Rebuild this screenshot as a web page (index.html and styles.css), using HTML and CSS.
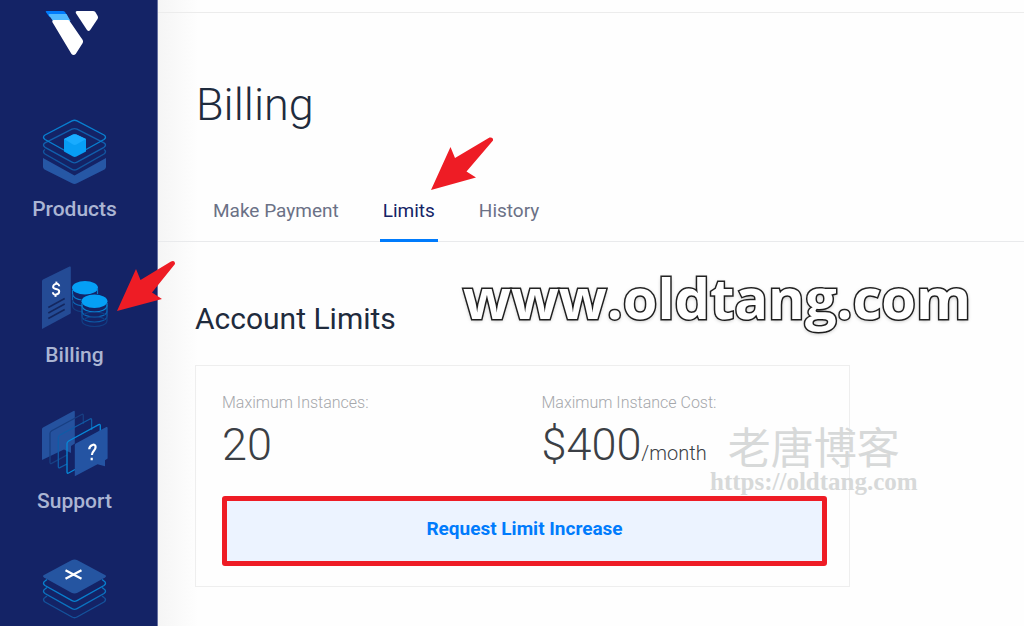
FILE: index.html
```html
<!DOCTYPE html>
<html lang="en">
<head>
<meta charset="utf-8">
<meta name="viewport" content="width=device-width, initial-scale=1">
<title>Billing</title>
<link rel="stylesheet" href="styles.css">
</head>
<body>
<div class="page">
  <aside class="sidebar">
    <a class="logo" href="#" aria-label="Home">
      <svg width="68" height="48" viewBox="41 8 68 48" aria-hidden="true">
        <path fill="#007bfc" d="M46.500 11H63q1.300 0 2 1l3 5H49.500l-3.700-5q-.3-1 .7-1z"/>
        <path fill="#51b9ff" d="M49.500 14H66.500l4 7H53l-4.300-6q-.2-1 .8-1z"/>
        <path fill="#fff" d="M53.500 20H68q1 0 1.600 1L82.700 40q.8 1.500 0 3l-7 11q-2.200 2-4.200 0L52.300 22q-.5-1.700 1.200-2z"/>
        <path fill="#fff" d="M76.800 11H93q1.500 0 2.300 1l2.400 4q.7 1.500 0 2.800l-7.500 11.200q-1.600 1.800-3.200 0L75.800 13q-.6-1.600 1-2z"/>
      </svg>
    </a>
    <nav class="menu" aria-label="Main">
      <a class="menu-item" href="#">
        <svg width="68" height="68" viewBox="41 118 68 68" aria-hidden="true">
          <path fill="#2657a5" d="M43 158l31.500 17.500L106 158v9q0 1.500-1.500 2.400L77 183.300q-2.500 1.200-5 0L44.500 169.400Q43 168.500 43 167z"/>
          <g fill="none" stroke-width="1.400">
            <path stroke="#12559f" d="M45 149.500q-3 2 0 4.500l27 15.300q2.500 1.400 5 0L104 154q3-2.500 0-4.500"/>
            <path stroke="#115fac" d="M45 142.800l27-13.600q2.500-1.200 5 0l27 13.600q3 2 0 4.500L77 162.200q-2.500 1.400-5 0L45 147.300q-3-2.500 0-4.500z"/>
            <path stroke="#087fd0" d="M45 135l27-14.200q2.500-1.200 5 0L104 135q3 2 0 4.500l-27 15q-2.500 1.400-5 0l-27-15q-3-2.500 0-4.500z"/>
          </g>
          <path fill="#079ef5" d="M64 139l9-4.400q1.700-.8 3.400 0L86 139v12.500l-9.600 5q-1.700.8-3.400 0l-9-5z"/>
          <path fill="#19acff" d="M64 139l9-4.400q1.700-.8 3.400 0L86 139l-9.600 5.500q-1.700.8-3.400 0z"/>
        </svg>
        <span>Products</span>
      </a>
      <a class="menu-item" href="#" aria-current="page">
        <svg width="68" height="68" viewBox="41 264 68 68" aria-hidden="true">
          <path fill="#244b95" d="M42 281q0-1 1-1.600L69.500 266.500q1.300-.5 1.300 1v45q0 1-1 1.600L42 329z"/>
          <path stroke="#14275f" stroke-width="1.500" d="M48.300 307.500l16.400-9M48.300 313l16.400-9M48.300 318.500l16.400-9"/>
          <path fill="none" stroke="#fff" stroke-width="2" d="M59.200 286.300c0-4-6.200-2.700-6.100.8 0 2.800 6 .8 6.100 4.100 0 3.700-6.200 5-6.300 1M56.500 281.700l-.3 2.800M55.700 294l-.3 2.800"/>
          <g fill="none" stroke-width="1.200">
            <path stroke="#087bcb" d="M72.500 290v4c0 3 4 5.500 10 6"/>
            <path stroke="#0c67b5" d="M72.500 294v6c0 3 4 5 9.500 5.800"/>
            <path stroke="#143f83" d="M72.500 300v6c0 3 4 5 9.500 5.800"/>
          </g>
          <ellipse cx="85" cy="287.700" rx="13" ry="6.800" fill="#059ff5"/>
          <path fill="none" stroke="#087bcb" stroke-width="1.200" d="M97.500 288v6"/>
          <ellipse cx="94.500" cy="301.500" rx="13.500" ry="7.500" fill="#142366"/>
          <ellipse cx="94.500" cy="301.300" rx="13" ry="6.800" fill="#059ff5"/>
          <g fill="none" stroke-width="1.200">
            <path stroke="#0984d5" d="M82 303v2.500c0 8.500 25 8.500 25 0V303"/>
            <path stroke="#096fbe" d="M82 305v6c0 8 25 8 25 0v-6"/>
            <path stroke="#0d5ba8" d="M82 311v5c0 8 25 8 25 0v-5"/>
            <path stroke="#123f85" d="M82 316v4.500c0 8 25 8 25 0V316"/>
            <path stroke="#103f86" d="M84 320c3-4.500 18-4.500 21 0M84 314.500c3-3 18-3 21 0"/>
          </g>
        </svg>
        <span>Billing</span>
      </a>
      <a class="menu-item" href="#">
        <svg width="68" height="68" viewBox="41 410 68 68" aria-hidden="true">
          <path fill="#25529f" d="M42 429q0-1 1-1.600l30.500-16.500q1.300-.5 1.300 1v31.600L71 446v7l-7-3.500L42 460z"/>
          <g fill="none" stroke-width="1.300">
            <path stroke="#183f83" d="M83.300 424v-8.500q0-1.800-1.600-1l-30 16.200q-1.700 1-1.700 2.600v29q0 1.800 1.600 1L67 455"/>
            <path stroke="#105ca7" d="M91.600 430v-10q0-1.800-1.600-1L60 435q-1.700 1-1.700 2.600v29q0 1.800 1.600 1L67 464"/>
            <path stroke="#0789d9" d="M100.300 431v-5.300q0-1.800-1.600-1L68.700 441q-1.700 1-1.700 2.600V472q0 1.800 1.600 1l6.400-3.500"/>
          </g>
          <path fill="#2454a3" d="M74.800 445q0-1 1-1.600l30.500-16.300q1.300-.5 1.300 1v30.500l-2.600 1.600v6l-7.500-2-22.700 12z"/>
          <path fill="none" stroke="#fff" stroke-width="2.200" d="M89.200 449.300c.2-4.400 6.400-6.500 6.400-2.300 0 3.800-3.700 3.600-3.700 8M91.700 457.700v2.600"/>
        </svg>
        <span>Support</span>
      </a>
      <a class="menu-item" href="#" aria-label="More tools">
        <svg width="68" height="68" viewBox="41 556 68 68" aria-hidden="true">
          <g fill="none" stroke-width="1.400">
            <path stroke="#14529b" d="M47 596l-2 1.500q-3 2 0 4.500l27 15q2.500 1.400 5 0l27-15q3-2.500 0-4.500l-2-1.500"/>
            <path stroke="#0b72bf" d="M47 587.500l-2 1.500q-3 2 0 4.500l27 15.200q2.500 1.400 5 0l27-15.200q3-2.500 0-4.500l-2-1.500"/>
            <path stroke="#087fce" d="M47 579.500l-2 1.500q-3 2 0 4.500l27 15.200q2.500 1.400 5 0l27-15.200q3-2.500 0-4.500l-2-1.500"/>
          </g>
          <path fill="#2555a1" d="M44 575l27.500-14.800q3-1.500 6 0L105 575q2 1.200 0 2.400l-27.500 15.300q-3 1.600-6 0L44 577.400q-2-1.200 0-2.400z"/>
          <path stroke="#fff" stroke-width="2.200" d="M65.500 570.200l16 8.600M81.500 570.200l-16 8.600"/>
        </svg>
      </a>
    </nav>
  </aside>

  <main class="main">
    <div class="topbar"></div>
    <h1 class="title">Billing</h1>
    <nav class="tabs" aria-label="Billing sections">
      <a class="tab" href="#">Make Payment</a>
      <a class="tab tab-active" href="#" aria-current="page">Limits</a>
      <a class="tab" href="#">History</a>
    </nav>
    <section class="limits">
      <h2 class="subtitle">Account Limits</h2>
      <div class="card">
        <dl class="stats">
          <div>
            <dt>Maximum Instances:</dt>
            <dd>20</dd>
          </div>
          <div>
            <dt>Maximum Instance Cost:</dt>
            <dd>$400<small>/month</small></dd>
          </div>
        </dl>
        <button class="request" type="button">Request Limit Increase</button>
      </div>
    </section>
  </main>

  <svg class="arrow arrow-billing" width="62" height="54" viewBox="0 0 62 54" aria-hidden="true">
    <path d="M0 51L19 9l4.500 11L54 1.500q4-1.500 4 2.500L35 32.500 45 39z"/>
  </svg>
  <svg class="arrow arrow-limits" width="66" height="54" viewBox="0 0 66 54" aria-hidden="true">
    <path d="M0 53L19.500 10l4.500 11L58.500.500q4-.5 3.500 3L35.500 34.500 45 40.500z"/>
  </svg>
  <div class="banner">www.oldtang.com</div>
  <div class="watermark">
    <div class="watermark-name" lang="zh">老唐博客</div>
    <div class="watermark-url">https://oldtang.com</div>
  </div>
</div>
</body>
</html>
```
FILE: styles.css
```css
* {
  box-sizing: border-box;
}

body {
  margin: 0;
  background: #fefefe;
  color: #1f2b3d;
  font-family: Roboto, "Liberation Sans", sans-serif;
}

a {
  text-decoration: none;
}

.page {
  position: relative;
  display: flex;
  min-height: 100vh;
  overflow: hidden;
}

.sidebar {
  flex: none;
  width: 158px;
  padding: 8px 8px 2px 0;
  background: #142366;
  border-right: 1px solid #6570a0;
}

.logo,
.menu-item {
  display: flex;
  flex-direction: column;
  align-items: center;
}

.menu {
  display: flex;
  flex-direction: column;
  gap: 40px;
  margin-top: 62px;
}

.menu-item {
  gap: 8px;
  color: #abb5d3;
  font-size: 21px;
  font-weight: 500;
  line-height: 30px;
}

.main {
  flex: 1;
  min-width: 0;
  background: linear-gradient(to right, #f5f5f5, #fefefe 40px);
}

.topbar {
  height: 13px;
  border-bottom: 1px solid #ececec;
}

.title {
  margin: 64px 38px 0;
  font-size: 45px;
  font-weight: 300;
  line-height: 56px;
}

.tabs {
  display: flex;
  gap: 38px;
  margin-top: 66px;
  padding-left: 52px;
  border-bottom: 1px solid #e9eaec;
}

.tab {
  margin-bottom: -1px;
  padding: 0 3px 16px;
  border-bottom: 3px solid transparent;
  color: #6b7186;
  font-size: 19px;
  line-height: 24px;
}

.tab-active {
  border-color: #007bfc;
  color: #142366;
}

.limits {
  max-width: 692px;
  padding: 59px 0 0 37px;
}

.subtitle {
  margin: 0 0 28px;
  font-size: 30px;
  font-weight: 400;
  line-height: 36px;
}

.card {
  padding: 26px 22px 20px 26px;
  border: 1px solid #eeeeee;
}

.stats {
  display: grid;
  grid-template-columns: 1fr 1fr;
  gap: 34px;
  margin: 0 0 24px;
}

.stats dt {
  color: #a5a7ab;
  font-size: 16px;
  font-weight: 300;
  line-height: 22px;
}

.stats dd {
  margin: 4px 0 0;
  color: #3b3f45;
  font-size: 45px;
  font-weight: 300;
  line-height: 54px;
}

.stats small {
  font-size: 20px;
  line-height: 24px;
}

.request {
  display: block;
  width: 100%;
  padding: 17px 16px 21px;
  background: #ecf3ff;
  border: 5px solid #ee1c25;
  border-radius: 3px;
  color: #007bfc;
  font-family: inherit;
  font-size: 19px;
  font-weight: 700;
  line-height: 22px;
}

.arrow {
  position: absolute;
  fill: #ee1c25;
}

.arrow-billing {
  left: 117px;
  top: 260px;
}

.arrow-limits {
  left: 431px;
  top: 137px;
}

.banner {
  position: absolute;
  left: 463px;
  top: 261px;
  color: #fff;
  font-family: "Open Sans", "Noto Sans", sans-serif;
  font-size: 56px;
  font-weight: 700;
  line-height: 72px;
  white-space: nowrap;
  -webkit-text-stroke: 3px #262626;
  paint-order: stroke fill;
  text-shadow: 0 1px 4px rgba(0, 0, 0, 0.4);
}

.watermark {
  position: absolute;
  left: 710px;
  top: 421px;
  color: #d7d9d9;
  text-align: center;
}

.watermark-name {
  font-family: "Noto Sans CJK SC", sans-serif;
  font-size: 43px;
  line-height: 48px;
}

.watermark-url {
  font-family: "Liberation Serif", serif;
  font-size: 25px;
  font-weight: 700;
  line-height: 26px;
}
```
